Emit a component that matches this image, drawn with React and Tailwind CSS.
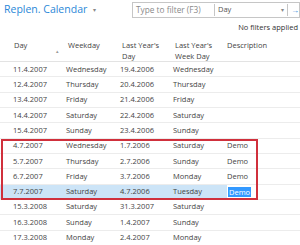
import React from "react";

const rows = [
  ["11.4.2007", "Wednesday", "19.4.2006", "Wednesday", ""],
  ["12.4.2007", "Thursday", "20.4.2006", "Thursday", ""],
  ["13.4.2007", "Friday", "21.4.2006", "Friday", ""],
  ["14.4.2007", "Saturday", "22.4.2006", "Saturday", ""],
  ["15.4.2007", "Sunday", "23.4.2006", "Sunday", ""],
];

const marked = [
  ["4.7.2007", "Wednesday", "1.7.2006", "Saturday", "Demo"],
  ["5.7.2007", "Thursday", "2.7.2006", "Sunday", "Demo"],
  ["6.7.2007", "Friday", "3.7.2006", "Monday", "Demo"],
];

const after = [
  ["15.3.2008", "Saturday", "31.3.2007", "Saturday", ""],
  ["16.3.2008", "Sunday", "1.4.2007", "Sunday", ""],
  ["17.3.2008", "Monday", "2.4.2007", "Monday", ""],
];

const cols = "grid grid-cols-[66px_54px_53px_54px_1fr]";

function Row({ r }) {
  return (
    <div className={`${cols} h-[15.33px] items-center border-b border-[#ececec]`}>
      <div className="pl-[13px]">{r[0]}</div>
      <div>{r[1]}</div>
      <div>{r[2]}</div>
      <div>{r[3]}</div>
      <div>{r[4]}</div>
    </div>
  );
}

export default function App() {
  return (
    <div className="w-[300px] h-[245px] overflow-hidden bg-white text-[#444] text-[7.5px] font-['Open_Sans',sans-serif]">
      {/* top bar */}
      <div className="h-[20px] flex items-center">
        <div className="pl-[4px] flex items-center w-[132px]">
          <span className="text-[10.5px] text-[#2b88d8]">Replen. Calendar</span>
          <span className="ml-[6px] text-[6px] text-[#888]">▾</span>
        </div>
        <div className="flex-1 h-[16px] border border-[#c6c6c6] flex items-center">
          <span className="pl-[3px] w-[82px] text-[8.3px] text-[#8a8a8a] border-r border-[#c6c6c6] h-[12px] leading-[12px]">Type to filter (F3)</span>
          <span className="pl-[3px] flex-1 text-[#555]">Day</span>
          <span className="text-[6px] text-[#888] pr-[3px]">▾</span>
          <span className="border-l border-[#c6c6c6] h-[12px] pl-[3px] text-[#2b88d8] text-[8px] leading-[12px] font-bold">→</span>
        </div>
      </div>

      <div className="h-[16px] flex items-center justify-end pr-[2px] text-[#333]">No filters applied</div>

      {/* header */}
      <div className={`${cols} h-[26px] pt-[4px] leading-[11px] border-b border-[#e3e3e3] items-start`}>
        <div className="pl-[14px] relative">
          Day
          <span className="absolute left-[56px] top-[6px] text-[5px] text-[#999]">▴</span>
        </div>
        <div className="pl-[2px]">Weekday</div>
        <div className="pl-[2px]">Last Year's<br />Day</div>
        <div className="pl-[2px]">Last Year's<br />Week Day</div>
        <div>Description</div>
      </div>

      {rows.map((r) => <Row key={r[0]} r={r} />)}

      <div className="relative">
        {marked.map((r) => <Row key={r[0]} r={r} />)}
        <div className={`${cols} h-[15.33px] items-center border-b border-[#ececec]`}>
          <div className="pl-[13px] bg-[#cce4f7] h-full flex items-center">7.7.2007</div>
          <div className="bg-[#cce4f7] h-full flex items-center">Saturday</div>
          <div className="bg-[#cce4f7] h-full flex items-center">4.7.2006</div>
          <div className="bg-[#cce4f7] h-full flex items-center">Tuesday</div>
          <div className="flex items-center pl-[1px]">
            <span className="bg-[#3399ff] text-white px-[1px] leading-[10px]">Demo</span>
          </div>
        </div>
        <div className="absolute left-[1px] top-0 bottom-0 w-[257px] border-2 border-solid border-[#d0303c]"></div>
      </div>

      {after.map((r) => <Row key={r[0]} r={r} />)}
    </div>
  );
}
